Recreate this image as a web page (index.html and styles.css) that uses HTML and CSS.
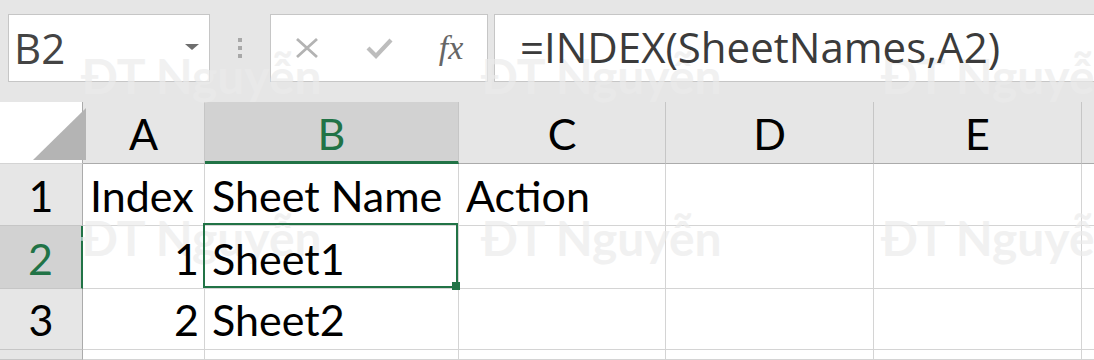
FILE: index.html
```html
<!DOCTYPE html>
<html lang="en">
<head>
    <meta charset="UTF-8">
    <meta name="viewport" content="width=device-width, initial-scale=1.0">
    <title>INDEX SheetNames</title>
    <link rel="stylesheet" href="styles.css">
</head>
<body>
    <!-- formula bar -->
    <div class="topbar">
        <div class="namebox">
            <span class="ref">B2</span>
            <span class="caret"></span>
        </div>
        <div class="grip"><i></i><i></i><i></i></div>
        <div class="fxbox">
            <svg width="24" height="22" viewBox="0 0 24 22">
                <path d="M2 2 L22 20 M22 2 L2 20" stroke="#b3b3b3" stroke-width="2.8" fill="none"/>
            </svg>
            <svg width="27" height="22" viewBox="0 0 27 22">
                <path d="M2 11 L10 19 L25 3" stroke="#bdbdbd" stroke-width="4.2" fill="none"/>
            </svg>
            <span class="fx">fx</span>
        </div>
        <div class="formula"><span>=INDEX(SheetNames,A2)</span></div>
    </div>

    <!-- grid -->
    <div class="sheet">
        <div class="cell corner"><span class="tri"></span></div>
        <div class="cell col"><span>A</span></div>
        <div class="cell col sel"><span>B</span></div>
        <div class="cell col"><span>C</span></div>
        <div class="cell col"><span>D</span></div>
        <div class="cell col"><span>E</span></div>
        <div class="cell col"></div>

        <div class="cell row"><span>1</span></div>
        <div class="cell"><span>Index</span></div>
        <div class="cell"><span>Sheet Name</span></div>
        <div class="cell"><span>Action</span></div>
        <div class="cell"></div>
        <div class="cell"></div>
        <div class="cell"></div>

        <div class="cell row sel"><span>2</span></div>
        <div class="cell num"><span>1</span></div>
        <div class="cell active"><span>Sheet1</span></div>
        <div class="cell"></div>
        <div class="cell"></div>
        <div class="cell"></div>
        <div class="cell"></div>

        <div class="cell row"><span>3</span></div>
        <div class="cell num"><span>2</span></div>
        <div class="cell"><span>Sheet2</span></div>
        <div class="cell"></div>
        <div class="cell"></div>
        <div class="cell"></div>
        <div class="cell"></div>

        <div class="cell row"></div>
        <div class="cell"></div>
        <div class="cell"></div>
        <div class="cell"></div>
        <div class="cell"></div>
        <div class="cell"></div>
        <div class="cell"></div>
    </div>

    <!-- watermark -->
    <div class="watermark">
        <span>ĐT Nguyễn</span><span>ĐT Nguyễn</span><span>ĐT Nguyễn</span>
        <span>ĐT Nguyễn</span><span>ĐT Nguyễn</span><span>ĐT Nguyễn</span>
    </div>
</body>
</html>
```

FILE: styles.css
```css
* {
box-sizing: border-box;
}

body {
margin: 0;
height: 360px;
overflow: hidden;
position: relative;
background-color: #e6e6e6;
font-family: Lato, sans-serif;
}

/* barra de fórmula */
.topbar {
display: flex;
height: 68px;
margin: 14px 0 20px 8px;
}

.namebox {
width: 202px;
background-color: #fff;
border: 1px solid #c6c6c6;
display: flex;
align-items: center;
justify-content: space-between;
padding: 0 10px 0 5px;
}

.ref {
position: relative;
z-index: 2;
font: 42px/64px "Open Sans", sans-serif;
color: #444;
}

.caret {
position: relative;
z-index: 2;
margin-top: -3px;
border-left: 7px solid transparent;
border-right: 7px solid transparent;
border-top: 6px solid #6e6e6e;
}

.grip {
width: 60px;
display: flex;
flex-direction: column;
align-items: center;
justify-content: center;
gap: 4px;
}

.grip i {
width: 4px;
height: 4px;
background-color: #a8a8a8;
}

.fxbox {
width: 218px;
background-color: #fff;
border: 1px solid #c6c6c6;
display: grid;
grid-template-columns: repeat(3, 1fr);
align-items: center;
justify-items: center;
}

.fxbox svg {
position: relative;
z-index: 2;
}

.fx {
position: relative;
z-index: 2;
font: italic 34px/1 "Liberation Serif", serif;
color: #666;
}

.formula {
flex: 1;
margin-left: 6px;
background-color: #fff;
border: 1px solid #c6c6c6;
border-right: 0;
padding-left: 25px;
font: 42px/64px "Open Sans", sans-serif;
color: #3b3b3b;
white-space: nowrap;
}

.formula span {
position: relative;
z-index: 2;
}

/* planilha */
.sheet {
display: grid;
grid-template-columns: 83px 122px 254px 207px 208px 208px 1fr;
grid-template-rows: 62px 62px 63px 61px 10px;
}

.cell {
background-color: #fff;
border-right: 1px solid #d4d4d4;
border-bottom: 1px solid #d4d4d4;
display: flex;
align-items: flex-end;
padding: 0 7px 8px 7px;
font-size: 43px;
line-height: 1;
color: #000;
white-space: nowrap;
}

.cell span {
position: relative;
z-index: 2;
}

.col {
background-color: #e6e6e6;
border-right-color: #c6c6c6;
border-bottom-color: #ababab;
justify-content: center;
}

.col.sel {
background-color: #d2d2d2;
color: #217346;
border-bottom: 3px solid #217346;
padding-bottom: 6px;
}

.corner {
position: relative;
border-right-color: #ababab;
}

.tri {
position: absolute;
left: 26px;
top: 5px;
width: 0;
height: 0;
border-left: 53px solid transparent;
border-bottom: 52px solid #b4b4b4;
}

.row {
background-color: #e6e6e6;
border-right-color: #ababab;
border-bottom-color: #c6c6c6;
justify-content: center;
}

.row.sel {
background-color: #d2d2d2;
color: #217346;
border-right: 2px solid #217346;
}

.num {
justify-content: flex-end;
padding-right: 5px;
}

.active {
position: relative;
}

.active::after {
content: "";
position: absolute;
left: -2px;
top: -3px;
right: 0;
bottom: 0;
border: 2px solid #217346;
z-index: 3;
}

.active::before {
content: "";
position: absolute;
right: -2px;
bottom: -2px;
width: 8px;
height: 8px;
background-color: #217346;
z-index: 4;
}

/* marca d'água */
.watermark {
position: absolute;
top: 0;
left: 0;
right: 0;
bottom: 0;
z-index: 1;
pointer-events: none;
overflow: hidden;
display: grid;
grid-template-columns: repeat(3, 400px);
grid-auto-rows: 162px;
padding: 52px 0 0 81px;
font: 700 48px/1 Lato, sans-serif;
color: rgba(235, 235, 235, 0.7);
white-space: nowrap;
}
```
